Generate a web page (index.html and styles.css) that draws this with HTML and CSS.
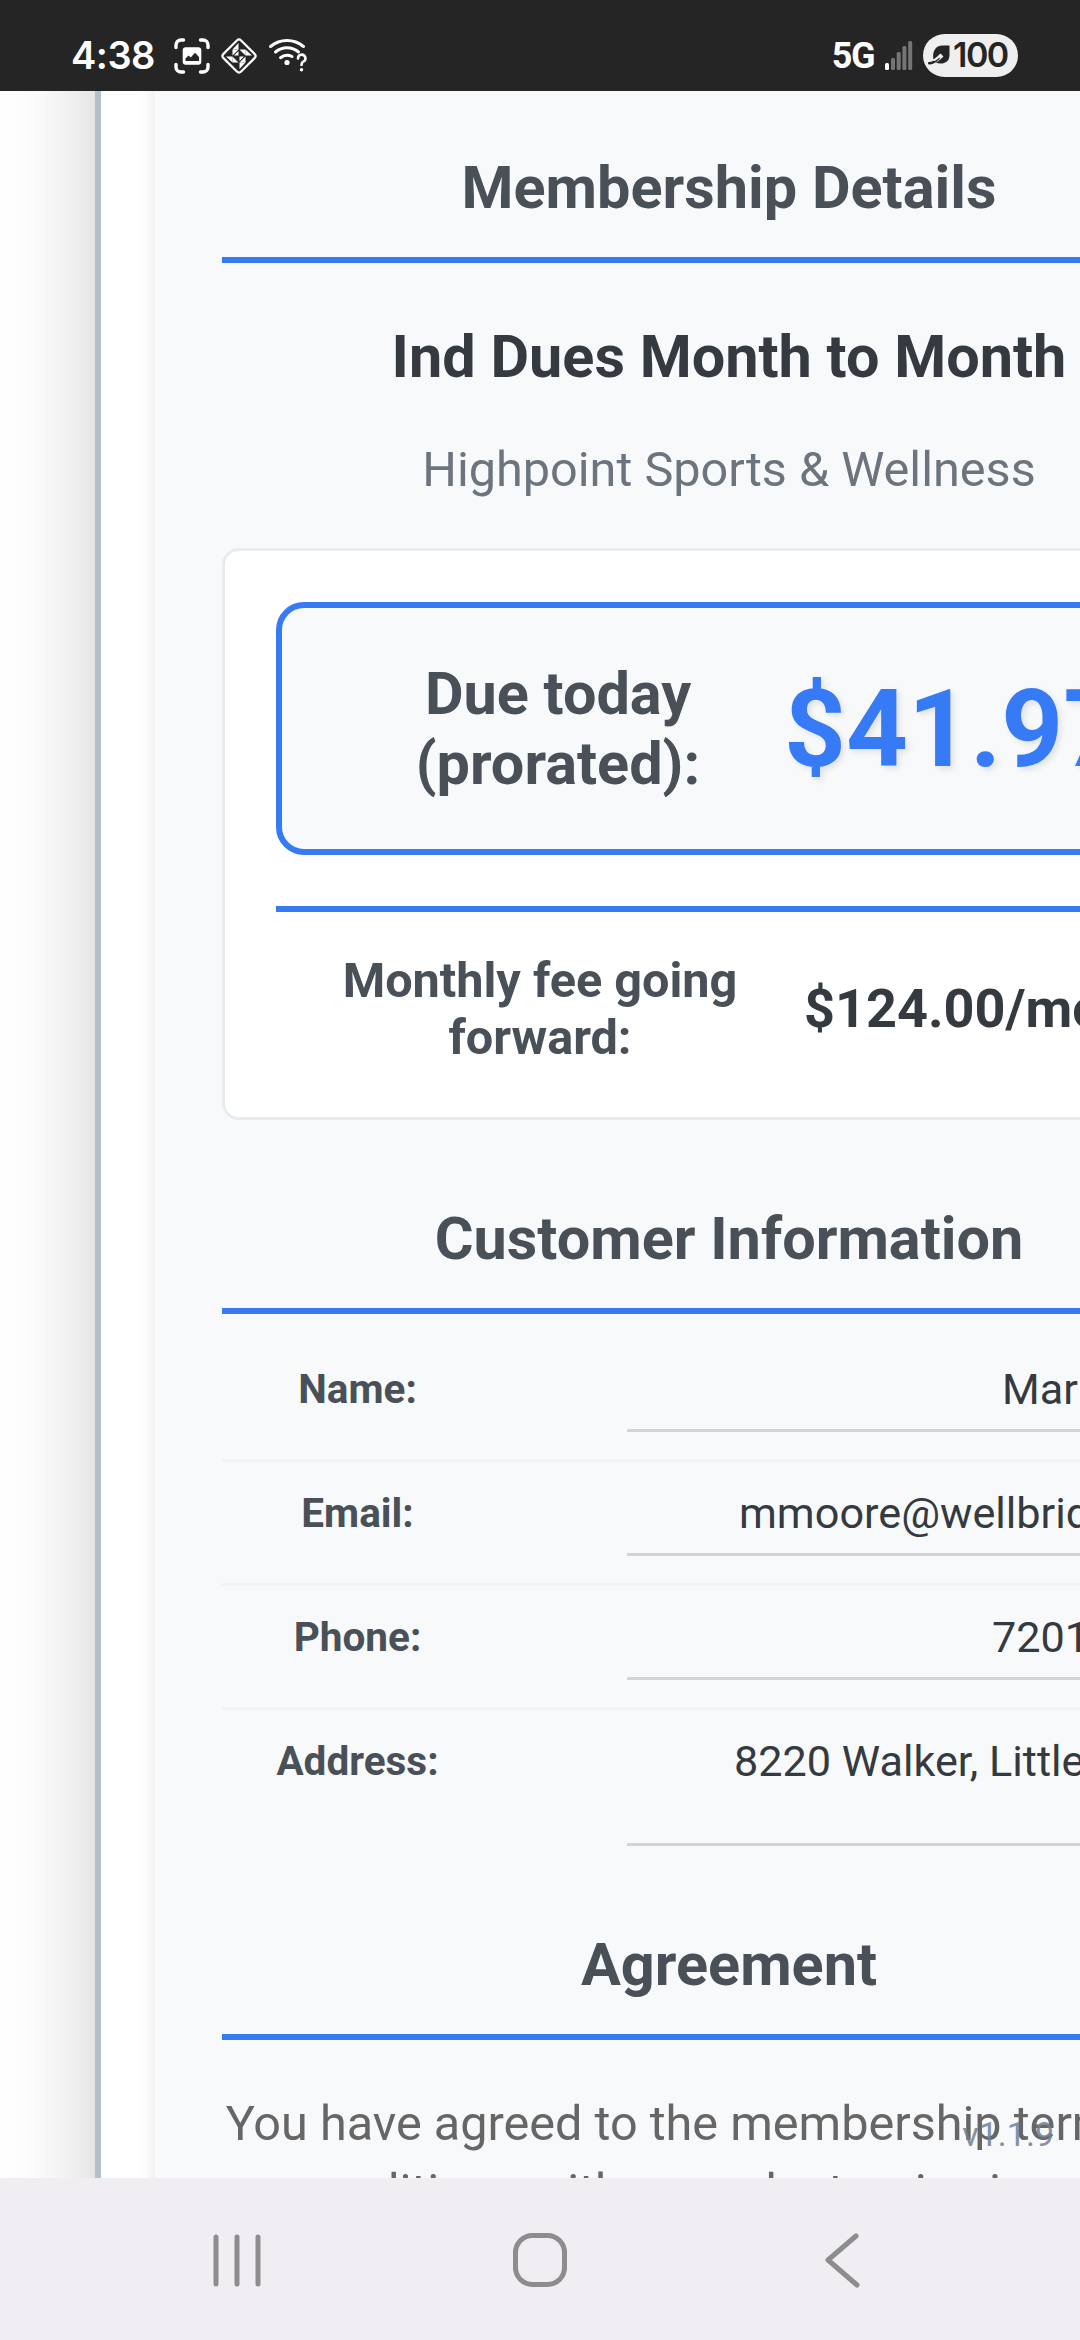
FILE: index.html
```html
<!DOCTYPE html>
<html lang="en">
<head>
<meta charset="utf-8">
<title>Membership Details</title>
<link rel="stylesheet" href="styles.css">
</head>
<body>
<header class="status">
  <div class="status-left">
    <span class="clock">4:38</span>
    <svg class="ico-shot" width="36" height="36" viewBox="0 0 36 36" fill="none" stroke="#fff" stroke-width="3.4" stroke-linecap="round">
      <path d="M2 9.500V7a5 5 0 0 1 5-5h2.500M26.500 2H29a5 5 0 0 1 5 5v2.500M34 26.500V29a5 5 0 0 1-5 5h-2.500M9.500 34H7a5 5 0 0 1-5-5v-2.500"/>
      <rect x="8.700" y="9.300" width="18.600" height="17.400" rx="3" fill="#fff" stroke="none"/>
      <path d="M11.500 23v-2.500l3-3 2.200 2 4.300-4.700 4 4.200v4z" fill="#252525" stroke="none"/>
    </svg>
    <svg class="ico-diamond" width="38" height="38" viewBox="0 0 38 38" fill="none" stroke="#fff">
      <rect x="6.500" y="6.500" width="25" height="25" rx="3" stroke-width="2.200" transform="rotate(45 19 19)"/>
      <g fill="#fff" stroke="none">
        <path d="M18.500 6v6.500h-6zM19.500 32v-6.500h6zM6 19.500h6.500v6zM32 18.500h-6.500v-6z"/>
        <path d="M12.500 12.500h6l-6 6zM25.500 25.500h-6l6-6zM19.500 12.500h6v6zM12.500 19.500l6 6h-6z"/>
        <path d="M18.500 14v4.500H14zM19.500 24v-4.500H24z"/>
      </g>
    </svg>
    <svg class="ico-wifi" width="40" height="38" viewBox="0 0 40 38" fill="none" stroke="#fff" stroke-width="3" stroke-linecap="round">
      <path d="M2.500 9.500a26 26 0 0 1 33 0M7.500 15a18 18 0 0 1 23 0M12.500 20.700a11 11 0 0 1 11.500-1.200"/>
      <circle cx="19" cy="25.500" r="2.600" fill="#fff" stroke="none"/>
      <path d="M30 21.500a3.700 3.700 0 1 1 5.300 3.200q-1.800 1-1.800 3.200" stroke-width="2.600"/>
      <circle cx="33.500" cy="32.800" r="1.700" fill="#fff" stroke="none"/>
    </svg>
  </div>
  <div class="status-right">
    <span class="network">5G</span>
    <svg class="ico-signal" width="28" height="32" viewBox="0 0 28 32">
      <rect x="0" y="23" width="4" height="7" rx="1.500" fill="#fff"/>
      <g fill="#757575"><rect x="6" y="18" width="4" height="12" rx="1.500"/><rect x="11.700" y="12" width="4" height="18" rx="1.500"/><rect x="17.400" y="6" width="4" height="24" rx="1.500"/><rect x="23.200" y="1" width="4" height="29" rx="1.500"/></g>
    </svg>
    <span class="battery">
      <svg width="22" height="20" viewBox="0 0 22 20"><path d="M21.500.5v9c0 6.500-4 9-9 9-3.500 0-5-1-6.500-2.200C3.500 10 6 .5 14 .5z" fill="#252525"/><path d="M1 18c4 0 8-3 13-8" fill="none" stroke="#efefef" stroke-width="4.200"/><path d="M1 18.300c4 0 7.500-3 9.500-5" fill="none" stroke="#252525" stroke-width="2.400" stroke-linecap="round"/><path d="M6 15.500q4-2 7-6" fill="none" stroke="#efefef" stroke-width="1.600"/></svg>
      <span class="level">100</span>
    </span>
  </div>
</header>

<main class="viewport">
  <div class="sheet">
    <div class="panel">
      <h2 class="heading">Membership Details</h2>
      <p class="plan">Ind Dues Month to Month</p>
      <p class="club">Highpoint Sports &amp; Wellness</p>
      <section class="pricing">
        <div class="due">
          <span class="due-label">Due today<br>(prorated):</span>
          <span class="due-amount">$41.97</span>
        </div>
        <div class="monthly">
          <span class="monthly-label">Monthly fee going<br>forward:</span>
          <span class="monthly-amount">$124.00/mo</span>
        </div>
      </section>

      <h2 class="heading">Customer Information</h2>
      <div class="fields">
        <div class="field"><span class="key">Name:</span><span class="value value-name">Mar</span></div>
        <div class="field"><span class="key">Email:</span><span class="value value-email">mmoore@wellbridge</span></div>
        <div class="field"><span class="key">Phone:</span><span class="value value-phone">7201</span></div>
        <div class="field"><span class="key">Address:</span><span class="value value-address">8220 Walker, Little</span></div>
      </div>

      <h2 class="heading">Agreement</h2>
      <p class="terms">You have agreed to the membership terms and<br>conditions with your electronic signature</p>
    </div>
  </div>
  <span class="version">v1.1.9</span>
</main>

<nav class="navbar">
  <svg width="60" height="64" viewBox="0 0 60 64" fill="none" stroke="#8d8d8f" stroke-width="5" stroke-linecap="round"><path d="M9 9v47M30 9v47M51 9v47"/></svg>
  <svg width="60" height="64" viewBox="0 0 60 64" fill="none" stroke="#8d8d8f" stroke-width="5"><rect x="5.500" y="7.500" width="49" height="49" rx="17"/></svg>
  <svg width="60" height="64" viewBox="0 0 60 64" fill="none" stroke="#8d8d8f" stroke-width="5" stroke-linecap="round" stroke-linejoin="round"><path d="M43 8L15 32l29 25"/></svg>
</nav>
</body>
</html>
```
FILE: styles.css
```css
* { box-sizing: border-box; }
body {
  margin: 0;
  width: 1080px;
  height: 2340px;
  overflow: hidden;
  display: flex;
  flex-direction: column;
  background: #fff;
  font-family: Roboto, "Liberation Sans", sans-serif;
}
h2, p { margin: 0; }
svg { display: block; flex: none; }

.status {
  flex: none;
  height: 91px;
  padding: 19px 62px 0 71px;
  display: flex;
  justify-content: space-between;
  align-items: center;
  background: #252525;
  color: #fff;
}
.status-left, .status-right { display: flex; align-items: center; }
.clock { width: 103px; font: 600 38px/46px Inter, sans-serif; letter-spacing: -0.5px; }
.ico-shot, .ico-diamond, .ico-wifi { margin-top: 1px; }
.ico-diamond { margin-left: 10px; }
.ico-wifi { margin-left: 10px; }
.network { font-weight: 700; font-size: 36px; line-height: 42px; letter-spacing: -1.500px; margin-top: 2px; }
.ico-signal { margin-left: 11px; margin-top: 1px; }
.battery {
  margin-left: 10px;
  width: 95px;
  height: 43px;
  border-radius: 22px;
  padding-left: 5px;
  display: flex;
  align-items: center;
  background: #efefef;
  color: #252525;
}
.level { margin-left: 3px; font: 600 34px/42px Inter, sans-serif; letter-spacing: -1.5px; }

.viewport { position: relative; flex: 1; overflow: hidden; }
.sheet {
  width: 1268px;
  height: 2600px;
  margin: -200px 0 0 95px;
  padding-left: 54px;
  border-left: 6px solid #b3c0c9;
  background: #fff;
  box-shadow: 0 0 90px rgba(0, 0, 0, 0.2);
}
.panel {
  width: 1148px;
  height: 2600px;
  padding: 262px 67px 0;
  background: #f8f9fb;
  box-shadow: 0 0 17px rgba(0, 0, 0, 0.1);
  text-align: center;
}
.heading {
  padding-bottom: 34px;
  border-bottom: 6px solid #367af6;
  font-weight: 700;
  font-size: 59.4px;
  line-height: 70px;
  color: #495057;
}
.plan { margin-top: 59px; font-weight: 700; font-size: 59.4px; line-height: 70px; color: #343a40; }
.club { margin-top: 49px; font-size: 48.6px; line-height: 58px; color: #6c757d; }

.pricing {
  margin: 49px 0 84px;
  padding: 51px;
  border: 3px solid #e9ecef;
  border-radius: 17px;
  background: #fff;
}
.due {
  height: 253px;
  padding-left: 54px;
  display: flex;
  align-items: center;
  border: 6px solid #367af6;
  border-radius: 28px;
  background: #f8f9fb;
}
.due-label { width: 444px; font-weight: 700; font-size: 59.4px; line-height: 70px; color: #495057; }
.due-amount {
  margin-left: 4px;
  font-weight: 700;
  font-size: 108px;
  line-height: 126px;
  color: #367af6;
  text-shadow: 3px 3px 6px rgba(0, 0, 0, 0.1);
}
.monthly {
  margin-top: 51px;
  padding: 40px 0 0 42px;
  display: flex;
  align-items: center;
  border-top: 6px solid #367af6;
}
.monthly-label { width: 444px; font-weight: 700; font-size: 48.6px; line-height: 57px; color: #495057; }
.monthly-amount { margin-left: 42px; font-weight: 700; font-size: 54px; line-height: 64px; color: #343a40; }

.fields { margin: 24px 0 57px; }
.field {
  display: flex;
  align-items: flex-start;
  padding: 27px 54px;
  border-bottom: 3px solid #f1f3f5;
}
.field:last-child { border-bottom: 0; }
.key { width: 163px; font-weight: 700; font-size: 40.5px; line-height: 49px; color: #495057; }
.value {
  flex: 1;
  height: 67px;
  margin-left: 188px;
  border-bottom: 3px solid #ced4da;
  font-size: 43.2px;
  line-height: 50px;
  text-align: left;
  white-space: nowrap;
  color: #343a40;
}
.value-name { padding-left: 375px; }
.value-email { padding-left: 112px; }
.value-phone { padding-left: 365px; }
.value-address { height: 109px; padding-left: 107px; }

.terms { margin-top: 50px; font-size: 48.6px; line-height: 67.500px; white-space: nowrap; color: #666; }
.version {
  position: absolute;
  right: 26px;
  bottom: 24px;
  font-size: 34px;
  line-height: 40px;
  color: #718096;
  opacity: 0.85;
}

.navbar {
  flex: none;
  height: 162px;
  padding: 1px 207px 0;
  display: flex;
  justify-content: space-between;
  align-items: center;
  background: #f0eef3;
}
```
